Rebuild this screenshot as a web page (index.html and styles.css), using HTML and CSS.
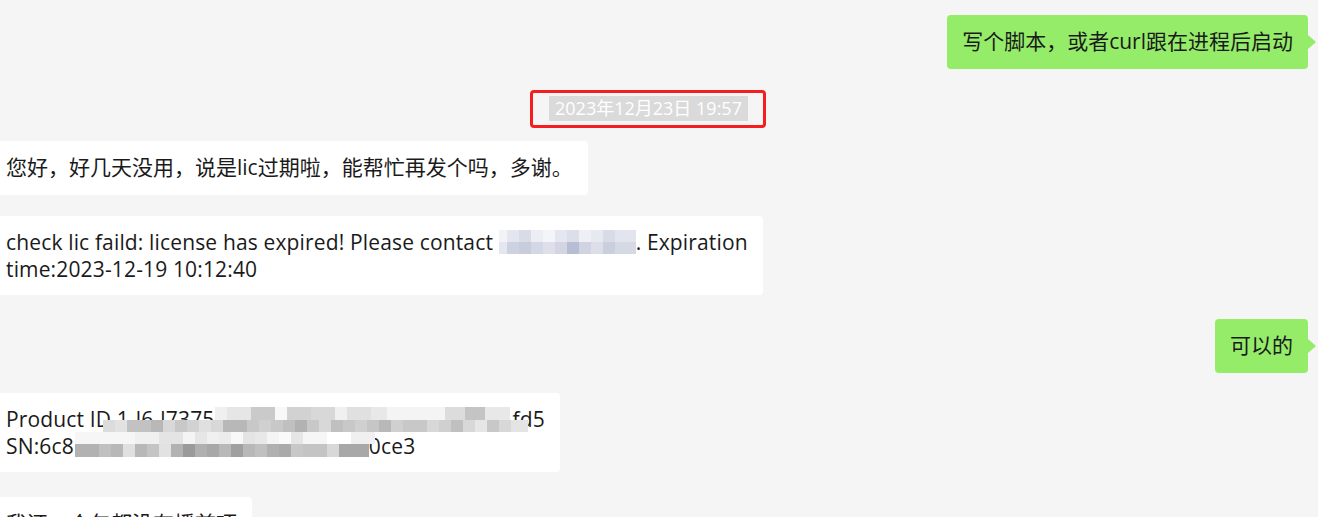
FILE: index.html
```html
<!DOCTYPE html>
<html lang="zh-CN">
<head>
<meta charset="utf-8">
<title>聊天记录</title>
<link rel="stylesheet" href="styles.css">
</head>
<body>
<div class="chat">
  <div class="row row-right">
    <div class="bubble me">写个脚本，或者curl跟在进程后启动</div>
  </div>

  <div class="row row-center gap-ts">
    <div class="mark">
      <span class="time">2023年12月23日 19:57</span>
    </div>
  </div>

  <div class="row row-left gap-13">
    <div class="bubble them">您好，好几天没用，说是lic过期啦，能帮忙再发个吗，多谢。</div>
  </div>

  <div class="row row-left gap-21">
    <div class="bubble them latin">check lic faild: license has expired! Please contact <span class="mosaic-mail"></span>. Expiration<br>time:2023-12-19 10:12:40</div>
  </div>

  <div class="row row-right gap-24">
    <div class="bubble me">可以的</div>
  </div>

  <div class="row row-left gap-20">
    <div class="bubble them latin">Product ID 1-l6-l7375<span class="hide-1"></span>fd5<br>SN:6c8<span class="hide-2"></span>0ce3<div class="mos mos-a"></div><div class="mos mos-b"></div><div class="mos mos-c"></div><div class="mos mos-d"></div></div>
  </div>

  <div class="row row-left gap-25">
    <div class="bubble them">我还一个包都没有播首项</div>
  </div>
</div>
</body>
</html>
```

FILE: styles.css
```css
html, body {
  margin: 0;
  padding: 0;
  background: #f5f5f5;
}

body {
  font-family: "Open Sans", "Noto Sans CJK SC", sans-serif;
  color: #1a1a1a;
  width: 1318px;
  height: 517px;
  overflow: hidden;
}

.chat {
  display: flex;
  flex-direction: column;
  padding: 15px 10px 0 0;
}

.row {
  display: flex;
}

.row-right {
  justify-content: flex-end;
}

.row-left {
  justify-content: flex-start;
  margin-left: -9px;
}

.row-center {
  justify-content: center;
  padding-right: 12px;
}

.gap-ts { margin-top: 21px; }
.gap-13 { margin-top: 13px; }
.gap-20 { margin-top: 20px; }
.gap-21 { margin-top: 21px; }
.gap-24 { margin-top: 24px; }
.gap-25 { margin-top: 25px; }

.bubble {
  position: relative;
  font-size: 21px;
  line-height: 27px;
  padding: 13px 15px 14px;
  border-radius: 4px;
  white-space: nowrap;
}

.bubble.latin {
  letter-spacing: 0.15px;
  padding-bottom: 12px;
}

.bubble.me {
  background: #95ec69;
}

.bubble.me::after {
  content: "";
  position: absolute;
  right: -8px;
  top: 20px;
  border-left: 8px solid #95ec69;
  border-top: 7px solid transparent;
  border-bottom: 7px solid transparent;
}

.bubble.them {
  background: #ffffff;
}

/* timestamp with red annotation frame */
.mark {
  border: 3px solid #f51d1d;
  border-radius: 4px;
  padding: 3px 15px 4px 16px;
  display: flex;
}

.time {
  background: #dadada;
  color: #ffffff;
  font-size: 18px;
  line-height: 25px;
  padding: 0 6px;
}

/* pixelated e-mail */
.mosaic-mail {
  display: inline-block;
  width: 137px;
  height: 24px;
  vertical-align: -4px;
  background:
    linear-gradient(90deg, #f2f3f7 0 8px, #e3e6ee 8px 20px, #d8dce7 20px 32px, #eceef4 32px 44px, #f4f5f8 44px 56px, #e4e7ef 56px 68px, #dcdfe9 68px 80px, #eef0f5 80px 92px, #e7e9f0 92px 104px, #d9dce7 104px 116px, #e2e5ed 116px 137px) top / 100% 50% no-repeat,
    linear-gradient(90deg, #e4e7ef 0 8px, #cdd2e0 8px 20px, #c8cddc 20px 32px, #d4d8e4 32px 44px, #dde0ea 44px 56px, #d2d6e2 56px 68px, #b7bdd2 68px 80px, #d0d4e1 80px 92px, #dcdfe9 92px 104px, #cacfdd 104px 116px, #d5d9e4 116px 137px) bottom / 100% 50% no-repeat;
}

/* pixelated product id / serial */
.hide-1 {
  display: inline-block;
  width: 298px;
}

.hide-2 {
  display: inline-block;
  width: 295px;
}

.mos {
  position: absolute;
}

.mos-a {
  left: 224px;
  top: 14px;
  width: 295px;
  height: 13px;
  background: linear-gradient(90deg, #f0f0f0 0 12px, #e6e6e6 12px 36px, #cacaca 36px 60px, #f8f8f8 60px 72px, #d2d2d2 72px 96px, #d8d8d8 96px 120px, #f0f0f0 120px 132px, #e0e0e0 132px 156px, #e8e8e8 156px 172px, #f4f4f4 172px 230px, #dcdcdc 230px 250px, #c4c4c4 250px 270px, #e8e8e8 270px 295px);
}

.mos-b {
  left: 112px;
  top: 27px;
  width: 425px;
  height: 12px;
  background: linear-gradient(90deg, #dcdcdc 0 12px, #e2e2e2 12px 24px, #c2c2c2 24px 48px, #b8b8b8 48px 60px, #d8d8d8 60px 72px, #c8c8c8 72px 84px, #d2d2d2 84px 96px, #e0e0e0 96px 108px, #d8d8d8 108px 120px, #b8b8b8 120px 144px, #c8c8c8 144px 156px, #d0d0d0 156px 168px, #c8c8c8 168px 180px, #c0c0c0 180px 192px, #b2b2b2 192px 204px, #c8c8c8 204px 216px, #d8d8d8 216px 228px, #c0c0c0 228px 240px, #c8c8c8 240px 252px, #d0d0d0 252px 264px, #c6c6c6 264px 276px, #b8b8b8 276px 288px, #d0d0d0 288px 300px, #c8c8c8 300px 324px, #d8d8d8 324px 336px, #d0d0d0 336px 348px, #c0c0c0 348px 360px, #d8d8d8 360px 372px, #e6e6e6 372px 384px, #c8c8c8 384px 396px, #d8d8d8 396px 408px, #e4e4e4 408px 425px);
}

.mos-c {
  left: 84px;
  top: 39px;
  width: 300px;
  height: 12px;
  background: linear-gradient(90deg, #f6f6f6 0 60px, #f0f0f0 60px 84px, #e4e4e4 84px 108px, #f4f4f4 108px 120px, #e6e6e6 120px 132px, #f0f0f0 132px 144px, #ececec 144px 156px, #f8f8f8 156px 168px, #e4e4e4 168px 180px, #e8e8e8 180px 192px, #f4f4f4 192px 204px, #fafafa 204px 216px, #e6e6e6 216px 228px, #f6f6f6 228px 252px, #ffffff 252px 276px, #f0f0f0 276px 300px);
}

.mos-d {
  left: 84px;
  top: 51px;
  width: 294px;
  height: 13px;
  background: linear-gradient(90deg, #b2b2b2 0 24px, #c0c0c0 24px 36px, #b8b8b8 36px 48px, #e0e0e0 48px 60px, #b8b8b8 60px 72px, #c4c4c4 72px 84px, #e2e2e2 84px 96px, #b2b2b2 96px 108px, #9a9a9a 108px 120px, #b0b0b0 120px 132px, #a8a8a8 132px 144px, #b8b8b8 144px 156px, #a0a0a0 156px 168px, #b8b8b8 168px 180px, #c0c0c0 180px 192px, #b0b0b0 192px 204px, #aaaaaa 204px 216px, #c8c8c8 216px 228px, #c4c4c4 228px 252px, #d8d8d8 252px 264px, #a8a8a8 264px 294px);
}
```
